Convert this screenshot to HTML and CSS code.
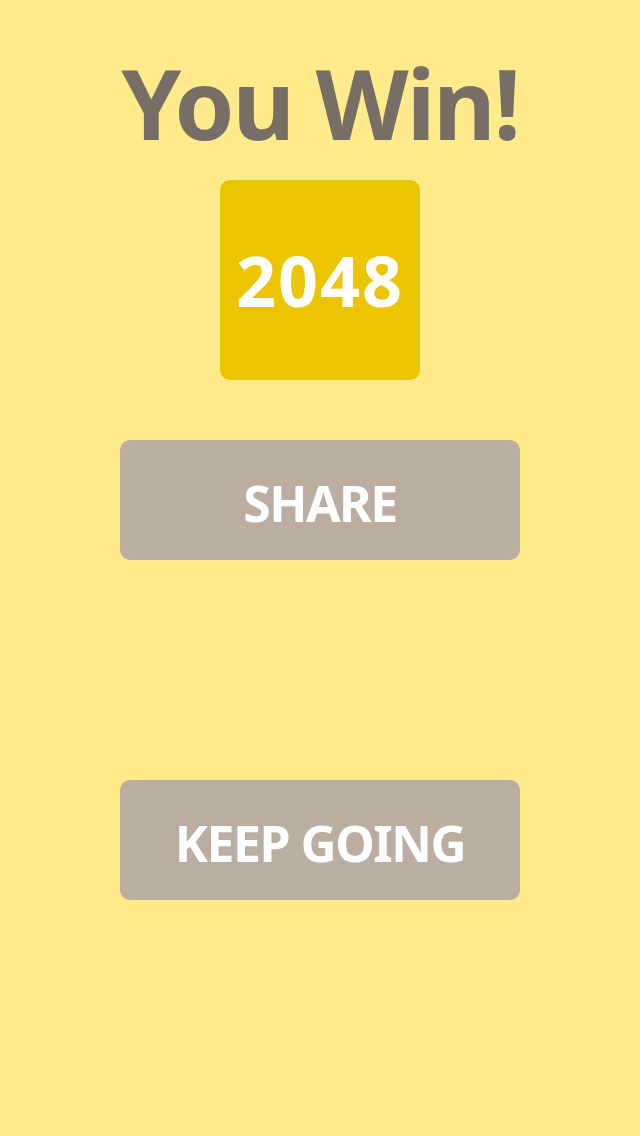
FILE: index.html
```html
<!DOCTYPE html>
<html>
<head>
<meta charset="utf-8">
<link rel="stylesheet" href="styles.css">
</head>
<body>
<main class="screen">
  <h1 class="title">You Win!</h1>
  <div class="tile">2048</div>
  <button class="btn share">SHARE</button>
  <button class="btn keep">KEEP GOING</button>
</main>
</body>
</html>
```
FILE: styles.css
```css
html, body {
  margin: 0;
  padding: 0;
}
body {
  background: #ffea8c;
  font-family: "Noto Sans", "Open Sans", sans-serif;
}
.screen {
  width: 640px;
  height: 1136px;
  display: flex;
  flex-direction: column;
  align-items: center;
  padding-top: 55px;
  box-sizing: border-box;
}
.title {
  margin: 0 0 29px;
  font-size: 96px;
  line-height: 96px;
  font-weight: 700;
  letter-spacing: -2px;
  color: #776e65;
}
.tile {
  width: 200px;
  height: 200px;
  border-radius: 10px;
  background: #edc400;
  color: #ffffff;
  font-size: 70px;
  line-height: 1;
  font-weight: 700;
  letter-spacing: 2px;
  display: flex;
  align-items: center;
  justify-content: center;
  margin-bottom: 60px;
}
.btn {
  width: 400px;
  height: 120px;
  border: none;
  border-radius: 10px;
  background: #bbada0;
  color: #ffffff;
  font-family: "Noto Sans", "Open Sans", sans-serif;
  font-size: 50px;
  line-height: 1;
  font-weight: 700;
  letter-spacing: -1.5px;
  display: flex;
  align-items: center;
  justify-content: center;
  padding: 6px 0 0;
  box-sizing: border-box;
}
.share {
  margin-bottom: 220px;
}
```
